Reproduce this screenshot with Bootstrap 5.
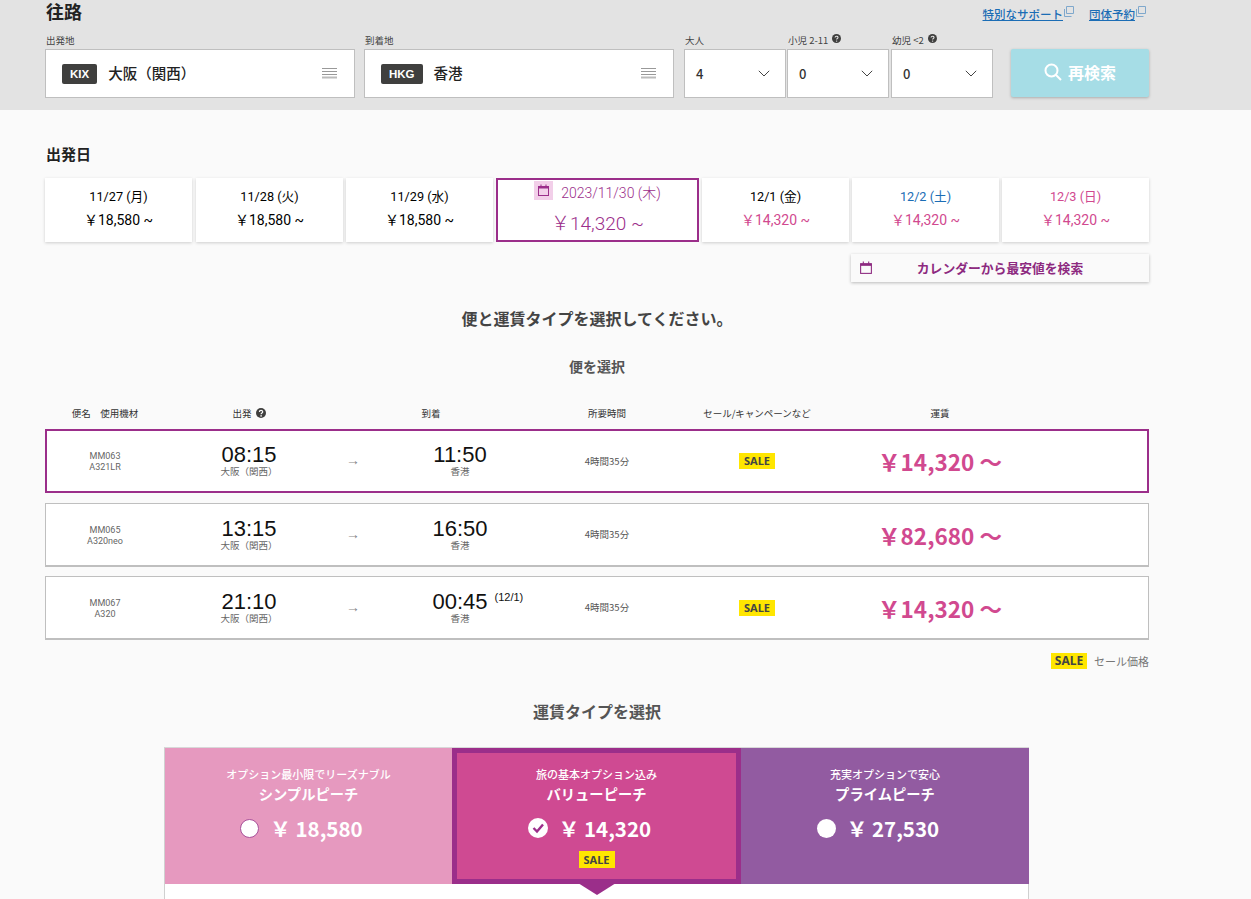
<!DOCTYPE html>
<html lang="ja">
<head>
<meta charset="utf-8">
<title>往路</title>
<link href="https://cdn.jsdelivr.net/npm/bootstrap@5.3.0/dist/css/bootstrap.min.css" rel="stylesheet">
<style>
html,body{height:899px;overflow:hidden}
body{background:#fafafa;color:#000;font-family:"Roboto","Noto Sans CJK JP",sans-serif;font-size:14px}
.band{background:#e3e3e3;height:110px;padding:0 102px 0 45px}
.band-top{height:34px}
.trip-title{font-size:18px;font-weight:700;line-height:22px;margin:0 0 0 1px;color:#222;font-family:"Noto Sans CJK JP",sans-serif}
.ext-links{gap:15px;padding:6px 3px 0 0;font-size:11.5px;line-height:14px;font-family:"Noto Sans CJK JP",sans-serif}
.ext-links a{color:#1b6db5;font-weight:500}
.ext-links svg{width:10px;height:11px;vertical-align:2px;margin-left:1px}
.fld-lbl{font-size:9.5px;line-height:12px;height:15px;color:#444;font-family:"Noto Sans CJK JP",sans-serif;white-space:nowrap;padding-left:1px}
.fld-lbl svg{width:9px;height:9px;vertical-align:1px;margin-left:2px}
.fld-box{height:49px;background:#fff;border:1px solid #bfbfbf;padding:0 17px 0 16px}
.port-w{width:310px;margin-right:9px}
.port-w2{margin-right:10px}
.sel-w{width:102px;margin-right:1px}
.sel-w2{width:102px;margin-right:2px}
.sel-w3{width:102px;margin-right:18px}
.code-tag{background:#3f3f3e;color:#fff;font-weight:700;font-size:11.5px;border-radius:2px;height:20px;line-height:20px;text-align:center;font-family:"Liberation Sans",sans-serif;margin-right:11px}
.city{font-size:14.5px;font-weight:500;color:#222;font-family:"Noto Sans CJK JP",sans-serif;padding-bottom:2px}
.sel-val{font-size:13px;font-weight:500;color:#333;font-family:"Noto Sans CJK JP",sans-serif;padding-left:11px}
.sel-box{padding:0 15px 0 0}
.sel-box svg{width:12px;height:7px}
.search-btn{width:138px;height:48px;margin-top:15px;background:#a6dde6;border:0;border-radius:2px;color:#fff;font-size:16px;font-weight:700;box-shadow:0 1px 3px rgba(0,0,0,.25);font-family:"Noto Sans CJK JP",sans-serif;gap:6px;padding:0 0 2px 0}
.wrap-main{padding:0 102px 0 45px}
.sec-date{font-size:15px;font-weight:700;line-height:20px;margin:34px 0 14px 1px;color:#222;font-family:"Noto Sans CJK JP",sans-serif}
.date-row{height:64px;gap:3px}
.day-cell{width:147px;height:64px;background:#fff;box-shadow:0 1px 3px rgba(0,0,0,.18);text-align:center;font-size:12.7px;color:#000;padding-top:9px;line-height:20px}
.day-next{margin-left:1px}
.day-cell .pr{font-size:14px;margin-top:3px;line-height:20px}
.day-on{width:203px;border:2px solid #9b2e8a;color:#9b2e8a;padding-top:1px;box-shadow:none}
.day-on .top{font-size:14px;line-height:24px;font-weight:300}
.day-on .pr{font-size:19px;margin-top:6px;line-height:26px;font-weight:300}
.ico-cal{display:inline-flex;background:#f2cfe9;width:19px;height:19px;align-items:center;justify-content:center;vertical-align:1px;margin-right:8px}
.ico-cal svg{width:13px;height:13px}
.c-pink{color:#d1498f}
.c-blue{color:#1b6db5}
.cal-wrap{margin-top:12px;height:28px}
.cal-btn{width:298px;height:28px;background:#fafafa;box-shadow:0 1px 3px rgba(0,0,0,.25);color:#8d2a80;font-size:12.8px;font-weight:700;padding:0 8px;font-family:"Noto Sans CJK JP",sans-serif}
.cal-btn svg{width:14px;height:14px}
.cal-btn span{flex:1;text-align:center;padding-right:14px}
.h-sel{font-size:16px;font-weight:700;line-height:22px;text-align:center;color:#444;margin:25px 0 0;font-family:"Noto Sans CJK JP",sans-serif}
.h-fl{font-size:14px;font-weight:700;line-height:20px;text-align:center;color:#555;margin:27px 0 0;font-family:"Noto Sans CJK JP",sans-serif}
.tbl-head{display:grid;grid-template-columns:120px 168px 196px 156px 144px 222px;margin-top:30px;height:23px;font-size:9.5px;line-height:14px;color:#333;text-align:center;font-family:"Noto Sans CJK JP",sans-serif}
.tbl-head svg{width:10px;height:10px;vertical-align:-1px;margin-left:2px}
.fl-row{display:grid;grid-template-columns:116px 172px 36px 178px 116px 184px 182px;background:#fff;border:1px solid #bfbfbf;border-bottom-width:2px;height:64px;margin-bottom:10px;padding-left:1px;align-items:center;text-align:center}
.fl-mid{margin-bottom:9px}
.fl-on{border:2px solid #9b2e8a;padding-left:0}
.fl-no{font-family:"Roboto",sans-serif;font-size:9px;line-height:10.6px;color:#666;padding-top:2px}
.tm{font-family:"Liberation Sans",sans-serif;font-size:22px;line-height:22px;color:#111}
.tm-extra{display:inline-block;width:0;white-space:nowrap;font-size:11px;line-height:10px;vertical-align:8px;margin-left:7px;margin-right:-7px;text-align:left}
.tm-cell{padding-bottom:1px}
.pl{font-size:9.5px;line-height:11px;color:#666;font-family:"Noto Sans CJK JP",sans-serif}
.arw{font-size:14px;color:#888;line-height:1;font-family:"Liberation Sans",sans-serif;padding-bottom:2px}
.dur{font-size:9.5px;color:#555;font-family:"Noto Sans CJK JP",sans-serif}
.sale-cell{line-height:0}
.sale-tag{display:inline-block;background:#ffe600;color:#444;font-weight:700;font-size:11px;line-height:16px;height:16px;width:36px;text-align:center;font-family:"Noto Sans",sans-serif}
.fare{font-size:22.5px;font-weight:700;color:#d1498f;font-family:"Noto Sans CJK JP",sans-serif;line-height:28px;white-space:nowrap}
.legend{font-size:11px;color:#777;gap:7px;margin-top:11px;height:20px;font-family:"Noto Sans CJK JP",sans-serif}
.legend .sale-tag{font-size:12px}
.h-fare{font-size:16px;font-weight:700;line-height:22px;text-align:center;color:#555;margin:29px 0 0;font-family:"Noto Sans CJK JP",sans-serif}
.fare-panel{width:865px;height:240px;margin:25px 0 0 119px;background:#fff;border:1px solid #d0d0d0;border-top:1px solid #d8d8d8}
.fare-cols{height:136px;display:grid;grid-template-columns:287px 289px 288px;color:#fff;text-align:center;font-family:"Noto Sans CJK JP",sans-serif;position:relative}
.fc-a{background:#e699bf}
.fc-b{background:#cf4a92;border:5px solid #9b2e8a;position:relative}
.fc-c{background:#925ba1}
.fc-sub{font-size:11px;font-weight:500;line-height:14px;padding-top:19px}
.fc-name{font-size:14.3px;font-weight:700;line-height:18px;margin-top:4px}
.fc-pr{font-size:20.5px;font-weight:700;line-height:28px;margin-top:11px;gap:11px;padding-right:14px}
.fc-b .fc-sub{padding-top:14px}
.fc-dot{width:19px;height:19px;border-radius:50%;background:#fff;display:inline-block;flex:none}
.fc-a .fc-dot{border:1px solid #a8509a}
.fc-pr svg{width:20px;height:20px;flex:none}
.fc-b .sale-tag{margin-top:9px;height:17px;line-height:17px}
.tip{position:absolute;left:50%;bottom:-16px;transform:translateX(-50%);width:0;height:0;border-left:19px solid transparent;border-right:19px solid transparent;border-top:12px solid #9b2e8a}
</style>
</head>
<body>
<div class="band">
  <div class="d-flex justify-content-between band-top">
    <h2 class="trip-title">往路</h2>
    <div class="d-flex ext-links">
      <span class="text-nowrap"><a href="#">特別なサポート</a><svg viewBox="0 0 10 11" fill="none" stroke="#7fa8cc"><path d="M2.5.5h7v7h-7zM.5 3v7.5h7"/></svg></span>
      <span class="text-nowrap"><a href="#">団体予約</a><svg viewBox="0 0 10 11" fill="none" stroke="#7fa8cc"><path d="M2.5.5h7v7h-7zM.5 3v7.5h7"/></svg></span>
    </div>
  </div>
  <div class="d-flex">
    <div class="port-w">
      <div class="fld-lbl">出発地</div>
      <div class="fld-box d-flex align-items-center">
        <span class="code-tag px-2">KIX</span><span class="city flex-grow-1">大阪（関西）</span>
        <svg width="15" height="11" viewBox="0 0 15 11" stroke="#999" fill="none"><path d="M0 .5h15M0 3.5h15M0 6.5h15"/><path d="M0 9.5h15" stroke="#bbb" stroke-width="2"/></svg>
      </div>
    </div>
    <div class="port-w port-w2">
      <div class="fld-lbl">到着地</div>
      <div class="fld-box d-flex align-items-center">
        <span class="code-tag px-2">HKG</span><span class="city flex-grow-1">香港</span>
        <svg width="15" height="11" viewBox="0 0 15 11" stroke="#999" fill="none"><path d="M0 .5h15M0 3.5h15M0 6.5h15"/><path d="M0 9.5h15" stroke="#bbb" stroke-width="2"/></svg>
      </div>
    </div>
    <div class="sel-w">
      <div class="fld-lbl">大人</div>
      <div class="fld-box sel-box d-flex align-items-center justify-content-between"><span class="sel-val">4</span><svg viewBox="0 0 12 7" fill="none" stroke="#444"><path d="M.8.8 6 6 11.2.8"/></svg></div>
    </div>
    <div class="sel-w2">
      <div class="fld-lbl">小児 2-11 <svg viewBox="0 0 10 10"><circle cx="5" cy="5" r="5" fill="#3f3f3e"/><path d="M3.4 4c0-2.1 3.3-2.1 3.3-.1 0 1.1-1.6 1.1-1.6 2.3" fill="none" stroke="#e3e3e3" stroke-width="1.2"/><circle cx="5.1" cy="7.9" r=".8" fill="#e3e3e3"/></svg></div>
      <div class="fld-box sel-box d-flex align-items-center justify-content-between"><span class="sel-val">0</span><svg viewBox="0 0 12 7" fill="none" stroke="#444"><path d="M.8.8 6 6 11.2.8"/></svg></div>
    </div>
    <div class="sel-w3">
      <div class="fld-lbl">幼児 &lt;2 <svg viewBox="0 0 10 10"><circle cx="5" cy="5" r="5" fill="#3f3f3e"/><path d="M3.4 4c0-2.1 3.3-2.1 3.3-.1 0 1.1-1.6 1.1-1.6 2.3" fill="none" stroke="#e3e3e3" stroke-width="1.2"/><circle cx="5.1" cy="7.9" r=".8" fill="#e3e3e3"/></svg></div>
      <div class="fld-box sel-box d-flex align-items-center justify-content-between"><span class="sel-val">0</span><svg viewBox="0 0 12 7" fill="none" stroke="#444"><path d="M.8.8 6 6 11.2.8"/></svg></div>
    </div>
    <button class="btn search-btn d-flex align-items-center justify-content-center" type="button">
      <svg width="18" height="18" viewBox="0 0 18 18" fill="none" stroke="#fff" stroke-width="2"><circle cx="7.5" cy="7.5" r="6"/><path d="m12 12 5 5"/></svg>再検索
    </button>
  </div>
</div>
<div class="wrap-main">
  <h3 class="sec-date">出発日</h3>
  <div class="d-flex date-row">
    <div class="day-cell"><div>11/27 (月)</div><div class="pr">￥18,580 ~</div></div>
    <div class="day-cell day-next"><div>11/28 (火)</div><div class="pr">￥18,580 ~</div></div>
    <div class="day-cell"><div>11/29 (水)</div><div class="pr">￥18,580 ~</div></div>
    <div class="day-cell day-on"><div class="top"><span class="ico-cal"><svg viewBox="0 0 13 13" fill="none" stroke="#9b2e8a"><rect x="1.5" y="2.5" width="10" height="9"/><path d="M1.5 3.5h10" stroke-width="2"/><path d="M4 .5v2M9 .5v2"/></svg></span>2023/11/30 (木)</div><div class="pr">￥14,320 ~</div></div>
    <div class="day-cell"><div>12/1 (金)</div><div class="pr c-pink">￥14,320 ~</div></div>
    <div class="day-cell"><div class="c-blue">12/2 (土)</div><div class="pr c-pink">￥14,320 ~</div></div>
    <div class="day-cell"><div class="c-pink">12/3 (日)</div><div class="pr c-pink">￥14,320 ~</div></div>
  </div>
  <div class="d-flex justify-content-end cal-wrap">
    <div class="cal-btn d-flex align-items-center"><svg viewBox="0 0 13 13" fill="none" stroke="#8d2a80"><rect x="1.5" y="2.5" width="10" height="9"/><path d="M1.5 3.5h10" stroke-width="2"/><path d="M4 .5v2M9 .5v2"/></svg><span>カレンダーから最安値を検索</span></div>
  </div>
  <h3 class="h-sel">便と運賃タイプを選択してください。</h3>
  <h4 class="h-fl">便を選択</h4>
  <div class="tbl-head">
    <div>便名　使用機材</div>
    <div>出発 <svg viewBox="0 0 10 10"><circle cx="5" cy="5" r="5" fill="#3f3f3e"/><path d="M3.4 4c0-2.1 3.3-2.1 3.3-.1 0 1.1-1.6 1.1-1.6 2.3" fill="none" stroke="#fafafa" stroke-width="1.2"/><circle cx="5.1" cy="7.9" r=".8" fill="#fafafa"/></svg></div>
    <div>到着</div><div>所要時間</div><div>セール/キャンペーンなど</div><div>運賃</div>
  </div>
  <div class="fl-row fl-on">
    <div class="fl-no">MM063<br>A321LR</div>
    <div class="tm-cell"><div class="tm">08:15</div><div class="pl">大阪（関西）</div></div>
    <div class="arw">→</div>
    <div class="tm-cell"><div class="tm">11:50</div><div class="pl">香港</div></div>
    <div class="dur">4時間35分</div>
    <div class="sale-cell"><span class="sale-tag">SALE</span></div>
    <div class="fare">￥14,320 〜</div>
  </div>
  <div class="fl-row fl-mid">
    <div class="fl-no">MM065<br>A320neo</div>
    <div class="tm-cell"><div class="tm">13:15</div><div class="pl">大阪（関西）</div></div>
    <div class="arw">→</div>
    <div class="tm-cell"><div class="tm">16:50</div><div class="pl">香港</div></div>
    <div class="dur">4時間35分</div>
    <div></div>
    <div class="fare">￥82,680 〜</div>
  </div>
  <div class="fl-row">
    <div class="fl-no">MM067<br>A320</div>
    <div class="tm-cell"><div class="tm">21:10</div><div class="pl">大阪（関西）</div></div>
    <div class="arw">→</div>
    <div class="tm-cell"><div class="tm">00:45<span class="tm-extra">(12/1)</span></div><div class="pl">香港</div></div>
    <div class="dur">4時間35分</div>
    <div class="sale-cell"><span class="sale-tag">SALE</span></div>
    <div class="fare">￥14,320 〜</div>
  </div>
  <div class="d-flex justify-content-end align-items-center legend"><span class="sale-tag">SALE</span><span>セール価格</span></div>
  <h4 class="h-fare">運賃タイプを選択</h4>
  <div class="fare-panel">
    <div class="fare-cols">
      <div class="fc-a">
        <div class="fc-sub">オプション最小限でリーズナブル</div>
        <div class="fc-name">シンプルピーチ</div>
        <div class="fc-pr d-flex justify-content-center align-items-center"><span class="fc-dot"></span><span>￥ 18,580</span></div>
      </div>
      <div class="fc-b">
        <div class="fc-sub">旅の基本オプション込み</div>
        <div class="fc-name">バリューピーチ</div>
        <div class="fc-pr d-flex justify-content-center align-items-center"><svg viewBox="0 0 20 20"><circle cx="10" cy="10" r="10" fill="#fff"/><path d="m5.5 10 3.5 3.5 6-7" fill="none" stroke="#9b2e8a" stroke-width="2.4"/></svg><span>￥ 14,320</span></div>
        <span class="sale-tag">SALE</span>
        <div class="tip"></div>
      </div>
      <div class="fc-c">
        <div class="fc-sub">充実オプションで安心</div>
        <div class="fc-name">プライムピーチ</div>
        <div class="fc-pr d-flex justify-content-center align-items-center"><span class="fc-dot"></span><span>￥ 27,530</span></div>
      </div>
    </div>
  </div>
</div>
<script src="https://cdn.jsdelivr.net/npm/bootstrap@5.3.0/dist/js/bootstrap.bundle.min.js"></script>
</body>
</html>
